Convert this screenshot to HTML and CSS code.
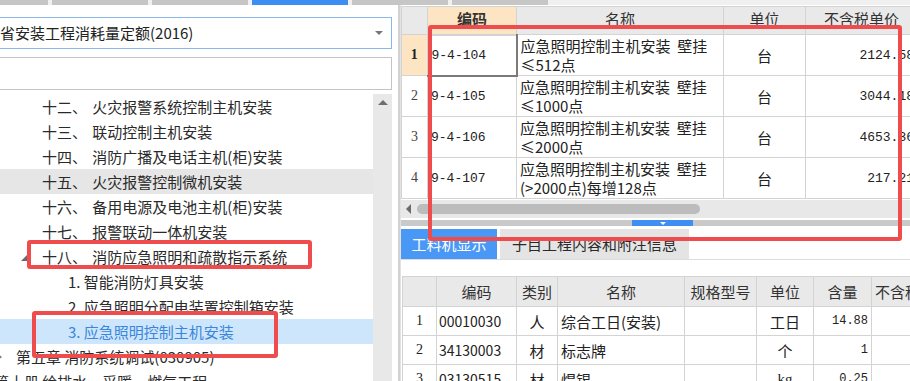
FILE: index.html
```html
<!DOCTYPE html>
<html lang="zh-CN">
<head>
  <meta charset="UTF-8" />
  <title>定额库 - 应急照明控制主机安装</title>
  <link rel="stylesheet" href="styles.css">
</head>
<body>

<div class="topstrip">
  <span class="ttab first"></span>
  <span class="ttab"></span>
  <span class="ttab"></span>
  <span class="ttab on"></span>
  <span class="ttab"></span>
  <span class="ttab"></span>
</div>

<div class="workspace">
  <div class="left">
    <div class="combo">
      <span class="combo-text">省安装工程消耗量定额(2016)</span>
      <span class="caret"></span>
    </div>
    <div class="search"></div>

    <div class="treewrap">
      <div class="tree">
        <div class="row lv1">十二、 火灾报警系统控制主机安装</div>
        <div class="row lv1">十三、 联动控制主机安装</div>
        <div class="row lv1">十四、 消防广播及电话主机(柜)安装</div>
        <div class="row lv1 hover">十五、 火灾报警控制微机安装</div>
        <div class="row lv1">十六、 备用电源及电池主机(柜)安装</div>
        <div class="row lv1">十七、 报警联动一体机安装</div>
        <div class="row lv1"><span class="open"></span>十八、 消防应急照明和疏散指示系统</div>
        <div class="row lv2">1. 智能消防灯具安装</div>
        <div class="row lv2">2. 应急照明分配电装置控制箱安装</div>
        <div class="row lv2 selected">3. 应急照明控制主机安装</div>
        <div class="row lv0"><span class="closed"></span>第五章 消防系统调试(030905)</div>
        <div class="row lvbook">第十册 给排水、采暖、燃气工程</div>
      </div>
      <div class="vscroll"><span class="up"></span></div>
    </div>
  </div>

  <div class="divider"></div>

  <div class="right">
    <div class="gridclip">
      <table class="grid quota">
        <colgroup>
          <col style="width:26px"><col style="width:89px"><col style="width:207px"><col style="width:82px"><col style="width:112px">
        </colgroup>
        <tr class="head">
          <th></th><th class="cur">编码</th><th>名称</th><th>单位</th><th>不含税单价</th>
        </tr>
        <tr>
          <td class="no cur">1</td><td class="code active">9-4-104</td><td class="name">应急照明控制主机安装&nbsp;&nbsp;壁挂<br>≤512点</td><td class="unit">台</td><td class="price">2124.58</td>
        </tr>
        <tr>
          <td class="no">2</td><td class="code">9-4-105</td><td class="name">应急照明控制主机安装&nbsp;&nbsp;壁挂<br>≤1000点</td><td class="unit">台</td><td class="price">3044.18</td>
        </tr>
        <tr>
          <td class="no">3</td><td class="code">9-4-106</td><td class="name">应急照明控制主机安装&nbsp;&nbsp;壁挂<br>≤2000点</td><td class="unit">台</td><td class="price">4653.36</td>
        </tr>
        <tr>
          <td class="no">4</td><td class="code">9-4-107</td><td class="name">应急照明控制主机安装&nbsp;&nbsp;壁挂<br>(&gt;2000点)每增128点</td><td class="unit">台</td><td class="price">217.21</td>
        </tr>
      </table>
    </div>

    <div class="hscroll"><span class="larrow"></span><span class="thumb"></span></div>
    <div class="splitter"><span class="grip"></span></div>

    <div class="tabs">
      <span class="tab on">工料机显示</span>
      <span class="tab">子目工程内容和附注信息</span>
    </div>

    <div class="tabbody">
      <table class="grid items">
        <colgroup>
          <col style="width:34px"><col style="width:80px"><col style="width:41px"><col style="width:127px"><col style="width:72px"><col style="width:57px"><col style="width:58px"><col style="width:60px">
        </colgroup>
        <tr class="head">
          <th></th><th>编码</th><th>类别</th><th>名称</th><th>规格型号</th><th>单位</th><th>含量</th><th class="cut">不含税</th>
        </tr>
        <tr>
          <td class="no">1</td><td class="num">00010030</td><td class="mid">人</td><td>综合工日(安装)</td><td></td><td class="mid">工日</td><td class="qty">14.88</td><td></td>
        </tr>
        <tr>
          <td class="no">2</td><td class="num">34130003</td><td class="mid">材</td><td>标志牌</td><td></td><td class="mid">个</td><td class="qty">1</td><td></td>
        </tr>
        <tr>
          <td class="no">3</td><td class="num">03130515</td><td class="mid">材</td><td>焊锡</td><td></td><td class="mid latin">kg</td><td class="qty">0.25</td><td></td>
        </tr>
      </table>
    </div>
  </div>
</div>

<!-- red annotation frames -->
<div class="mark mark-grid"></div>
<div class="mark mark-chapter"></div>
<div class="mark mark-item"></div>

</body>
</html>
```

FILE: styles.css
```css
body {
  margin: 0;
  width: 910px;
  height: 381px;
  overflow: hidden;
  position: relative;
  background: #fff;
  font-family: "Noto Sans CJK SC", sans-serif;
  font-size: 15px;
  color: #222;
}

/* top tab strip */
.topstrip {
  display: flex;
  gap: 4px;
  height: 5px;
  background: #f0f0f0;
}

.ttab {
  width: 96px;
  background: #c6c6c6;
}

.ttab.first { width: 48px; }
.ttab.on { background: #3d8ef2; }

.workspace {
  display: flex;
  height: 376px;
}

/* left tree panel */
.left {
  width: 398px;
  flex-shrink: 0;
  overflow: hidden;
}

.combo {
  display: flex;
  align-items: center;
  height: 32px;
  box-sizing: border-box;
  margin: 12px 6px 0 -4px;
  padding-left: 3px;
  border: 1px solid #89b9ec;
  line-height: 30px;
}

.combo-text { flex-grow: 1; }

.caret {
  width: 0;
  height: 0;
  margin-right: 8px;
  border-left: 4px solid transparent;
  border-right: 4px solid transparent;
  border-top: 4px solid #777;
}

.search {
  height: 33px;
  box-sizing: border-box;
  margin: 8px 6px 0 -4px;
  border: 1px solid #c4c4c4;
}

.treewrap {
  display: flex;
  margin-top: 4px;
  height: 300px;
}

.tree {
  width: 373px;
  overflow: hidden;
  white-space: nowrap;
}

.row {
  display: flex;
  align-items: center;
  height: 25px;
  line-height: 25px;
  color: #2a2a2a;
}

.row.lv1 { padding-left: 42px; word-spacing: 2px; }
.row.lv2 { padding-left: 68px; }
.row.lv0 { padding-left: 17px; }
.row.lvbook { padding-left: 0; margin-left: -6px; }

.row.hover { background: #e6e6e6; }
.row.selected { background: #cde6fb; color: #3a86dc; }

.open {
  width: 0;
  height: 0;
  margin-left: -21px;
  margin-right: 15px;
  margin-top: 2px;
  border-left: 6px solid transparent;
  border-bottom: 6px solid #6a6a6a;
}

.closed {
  width: 0;
  height: 0;
  margin-left: -19px;
  margin-right: 14px;
  border-top: 3px solid transparent;
  border-bottom: 3px solid transparent;
  border-left: 4px solid #777;
}

.vscroll {
  width: 19px;
  background: #e8e8e8;
  display: flex;
  justify-content: center;
}

.up {
  width: 0;
  height: 0;
  margin-top: 6px;
  border-left: 5px solid transparent;
  border-right: 5px solid transparent;
  border-bottom: 5px solid #6e6e6e;
}

.divider {
  width: 2px;
  flex-shrink: 0;
  background: #d2d2d2;
}

/* right panel */
.right {
  flex-grow: 1;
  overflow: hidden;
  border-left: 1px solid #e2e2e2;
}

.gridclip {
  overflow: hidden;
  margin-top: 1px;
  height: 194px;
}

.grid {
  border-collapse: collapse;
  table-layout: fixed;
}

.grid th, .grid td {
  border: 1px solid #d3d3d3;
  padding: 0 3px;
  overflow: hidden;
  white-space: nowrap;
}

.grid th {
  background: #e9e9e9;
  font-weight: normal;
  color: #333;
}

.quota { width: 516px; }
.quota .head th { height: 28px; line-height: 18px; vertical-align: top; padding-top: 3px; box-sizing: border-box; }
.quota th.cur { background: #fde5c3; font-weight: bold; }
.quota td { height: 41px; box-sizing: border-box; }

.quota td.no {
  text-align: center;
  font-family: "Liberation Serif", serif;
  font-size: 14px;
  color: #444;
  padding: 0;
}

.quota td.no.cur { background: #fde5c3; font-weight: bold; color: #222; }

.quota td.code {
  font-family: "Liberation Mono", monospace;
  font-size: 13px;
}

.quota td.code.active { border: 2px solid #7a7a7a; border-left-color: #d3d3d3; border-top-color: #d3d3d3; }

.quota td.name { line-height: 19px; }
.quota td.unit { text-align: center; }

.quota td.price {
  text-align: right;
  font-family: "Liberation Mono", monospace;
  font-size: 13px;
}

.hscroll {
  display: flex;
  align-items: center;
  height: 18px;
  background: #e8e8e8;
  padding-left: 5px;
}

.larrow {
  width: 0;
  height: 0;
  border-top: 5px solid transparent;
  border-bottom: 5px solid transparent;
  border-right: 5px solid #6b6b6b;
  margin-right: 6px;
}

.thumb {
  width: 283px;
  height: 10px;
  border-radius: 5px;
  background: #bcbcbc;
}

.splitter {
  height: 6px;
  margin-top: 2px;
  background: #c9c9c9;
  display: flex;
  padding-left: 231px;
}

.grip {
  width: 61px;
  background: #3f8ff3;
  display: flex;
  justify-content: center;
  align-items: center;
}

.grip::after {
  content: "";
  border-left: 3px solid transparent;
  border-right: 3px solid transparent;
  border-top: 3px solid #fff;
}

.tabs {
  display: flex;
  gap: 3px;
  margin-top: 3px;
  height: 30px;
}

.tab {
  padding: 0 12px;
  line-height: 30px;
  background: #e4e4e4;
  color: #2a2a2a;
}

.tab.on {
  width: 96px;
  box-sizing: border-box;
  background: #4a98f5;
  color: #fff;
  text-align: center;
  padding: 0;
}

.tabbody {
  border-top: 1px solid #dcdcdc;
  padding: 16px 0 0 1px;
}

.items { width: 529px; }
.items .head th { height: 30px; box-sizing: border-box; }
.items td { height: 29px; box-sizing: border-box; }
.items th.cut { text-align: left; }

.items td.no {
  text-align: center;
  font-family: "Liberation Serif", serif;
  font-size: 14px;
  padding: 0;
}

.items td.num { font-size: 14px; padding-left: 2px; }
.items td.mid { text-align: center; }
.items td.latin { font-family: "Liberation Serif", serif; }

.items td.qty {
  text-align: right;
  font-family: "Liberation Mono", monospace;
  font-size: 12px;
}

/* annotation frames */
.mark {
  position: absolute;
  border: 4px solid #ef4d4d;
  border-radius: 3px;
  box-sizing: border-box;
}

.mark-grid { left: 428px; top: 25px; width: 474px; height: 216px; }
.mark-chapter { left: 27px; top: 240px; width: 285px; height: 29px; }
.mark-item { left: 32px; top: 311px; width: 246px; height: 47px; }
```
